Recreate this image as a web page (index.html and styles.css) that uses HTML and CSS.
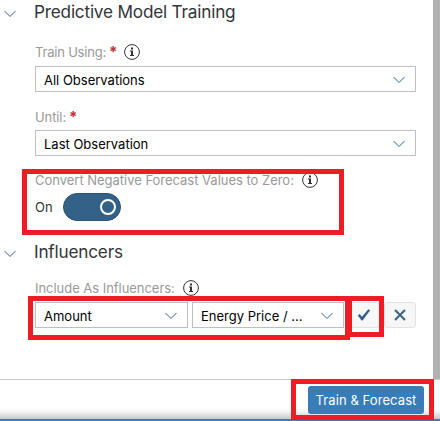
FILE: index.html
```html
<!DOCTYPE html>
<html lang="en">
<head>
<meta charset="utf-8">
<title>Predictive Model Training</title>
<link rel="stylesheet" href="styles.css">
</head>
<body>
<svg class="defs" width="0" height="0" aria-hidden="true">
  <symbol id="chev" viewBox="0 0 12 8"><path d="M.5 1 6 6.5 11.5 1" fill="none" stroke="currentColor" stroke-width="1"/></symbol>
  <symbol id="info" viewBox="0 0 16 16"><circle cx="8" cy="8" r="7.4" fill="none" stroke="currentColor"/><path d="M7 3.5h2v2H7zM6 6.6h3v4.4h1v1H6v-1h1V7.6H6z" fill="currentColor"/></symbol>
</svg>
<div class="app">
  <main class="panel">
    <section>
      <h2 class="title"><svg class="chev"><use href="#chev"/></svg><span class="t-model">Predictive Model Training</span></h2>
      <div class="fields">
        <div class="label label-train"><span class="l-train">Train Using:</span><b>*</b><svg class="info"><use href="#info"/></svg></div>
        <div class="select"><span class="v-all">All Observations</span><svg class="chev"><use href="#chev"/></svg></div>
        <div class="label label-until"><span class="l-until">Until:</span><b>*</b></div>
        <div class="select"><span class="v-last">Last Observation</span><svg class="chev"><use href="#chev"/></svg></div>
        <div class="label label-convert"><span class="l-convert">Convert Negative Forecast Values to Zero:</span><svg class="info"><use href="#info"/></svg></div>
        <div class="switch"><span>On</span><div class="track"><i></i></div></div>
      </div>
    </section>
    <section>
      <h2 class="title title-inf"><svg class="chev"><use href="#chev"/></svg><span class="t-inf">Influencers</span></h2>
      <div class="fields">
        <div class="label label-include"><span class="l-include">Include As Influencers:</span><svg class="info"><use href="#info"/></svg></div>
        <div class="row">
          <div class="select small"><span class="v-amount">Amount</span><svg class="chev"><use href="#chev"/></svg></div>
          <div class="select small price"><span class="v-energy">Energy Price / ...</span><svg class="chev"><use href="#chev"/></svg></div>
          <div class="btn"><svg width="14" height="14" viewBox="0 0 14 14"><path d="M.8 7.4 2.6 6 5 8.8 11.3 1.2 13.2 2.2 5.6 12.6 4.6 12.6Z" fill="#346187"/></svg></div>
          <div class="btn"><svg width="12" height="12" viewBox="0 0 12 12"><path d="M1 1l10 10M11 1 1 11" stroke="#346187" stroke-width="2"/></svg></div>
        </div>
      </div>
    </section>
  </main>
  <footer class="footer"><div class="primary"><span>Train &amp; Forecast</span></div></footer>
</div>
<div class="mark mark-convert"></div>
<div class="mark mark-row"></div>
<div class="mark mark-check"></div>
<div class="mark mark-forecast"></div>
</body>
</html>
```
FILE: styles.css
```css
* { box-sizing: border-box; }
body { margin: 0; width: 440px; height: 421px; overflow: hidden; position: relative; background: #fff; font: 13px Inter, Roboto, sans-serif; color: #000; }
.defs { position: absolute; }
.app { display: flex; flex-direction: column; height: 421px; }
.panel { height: 379px; border-right: 7px solid #b1b1b1; }
.title { display: flex; align-items: center; height: 24px; margin: 0; padding-left: 4px; gap: 18px; font-size: 17.2px; letter-spacing: -.2px; font-weight: 400; color: #32363a; }
.title .chev { margin-top: 4px; }
.title-inf { margin-top: 19px; }
.title span, .label span, .select span, .primary span { white-space: nowrap; }
.title span { padding-bottom: 1px; }
.chev { width: 12px; height: 8px; flex: none; color: #346187; }
.fields { padding-left: 35px; width: 416px; }
.label { display: flex; align-items: center; height: 16px; color: #999; }
.label b { color: #b33; font-size: 15px; line-height: 16px; width: 7px; margin-left: 2px; }
.label .l-train { width: 72px; letter-spacing: -.2px; }
.label .l-until { width: 32px; letter-spacing: -.1px; }
.label .l-convert { width: 259px; letter-spacing: -.02px; }
.label .l-include { width: 140px; letter-spacing: -.04px; }
.info { width: 16px; height: 16px; color: #333; margin-left: 8px; flex: none; }
.label-train { margin: 20px 0 6px; }
.label-until { margin: 17px 0 5px; }
.label-convert { margin: 16px 0 5px; }
.label-include { margin: 16px 0 6px; }
.select { display: flex; align-items: center; justify-content: space-between; height: 26px; border: 1px solid #bfbfbf; padding: 1px 10px 0 8px; background: #fff; }
.select .chev { margin-top: 1px; }
.switch { display: flex; align-items: center; height: 28px; gap: 9px; color: #32363a; }
.switch span { width: 19px; }
.track { display: flex; align-items: center; justify-content: flex-end; width: 58px; height: 28px; padding-right: 4px; border: 1px solid #2c5475; border-radius: 14px; background: #346187; }
.track i { width: 16px; height: 16px; border: 2px solid #fff; border-radius: 50%; }
.row { display: flex; gap: 4px; }
.small { width: 153px; }
.price { width: 152px; }
.btn { display: flex; align-items: center; justify-content: center; width: 32px; height: 26px; border: 1px solid #e2e2e2; border-radius: 3px; background: #f7f7f7; }
.footer { display: flex; justify-content: flex-end; height: 42px; padding: 6px 16px 0; border-top: 1px solid #c9c9c9; border-bottom: 2px solid #427cac; background: linear-gradient(#fff 0 72%, #f3f3f3 82%, #c7c7c7); }
.primary { display: flex; align-items: center; justify-content: center; width: 116px; height: 28px; border-radius: 3px; background: #387db7; color: #fff; letter-spacing: .08px; }
.mark { position: absolute; border: 5px solid #ee1c24; }
.mark-convert { left: 22px; top: 169px; width: 322px; height: 66px; }
.mark-row { left: 28px; top: 296px; width: 322px; height: 44px; }
.mark-check { left: 347px; top: 296px; width: 37px; height: 41px; }
.mark-forecast { left: 291px; top: 379px; width: 143px; height: 41px; }
```
